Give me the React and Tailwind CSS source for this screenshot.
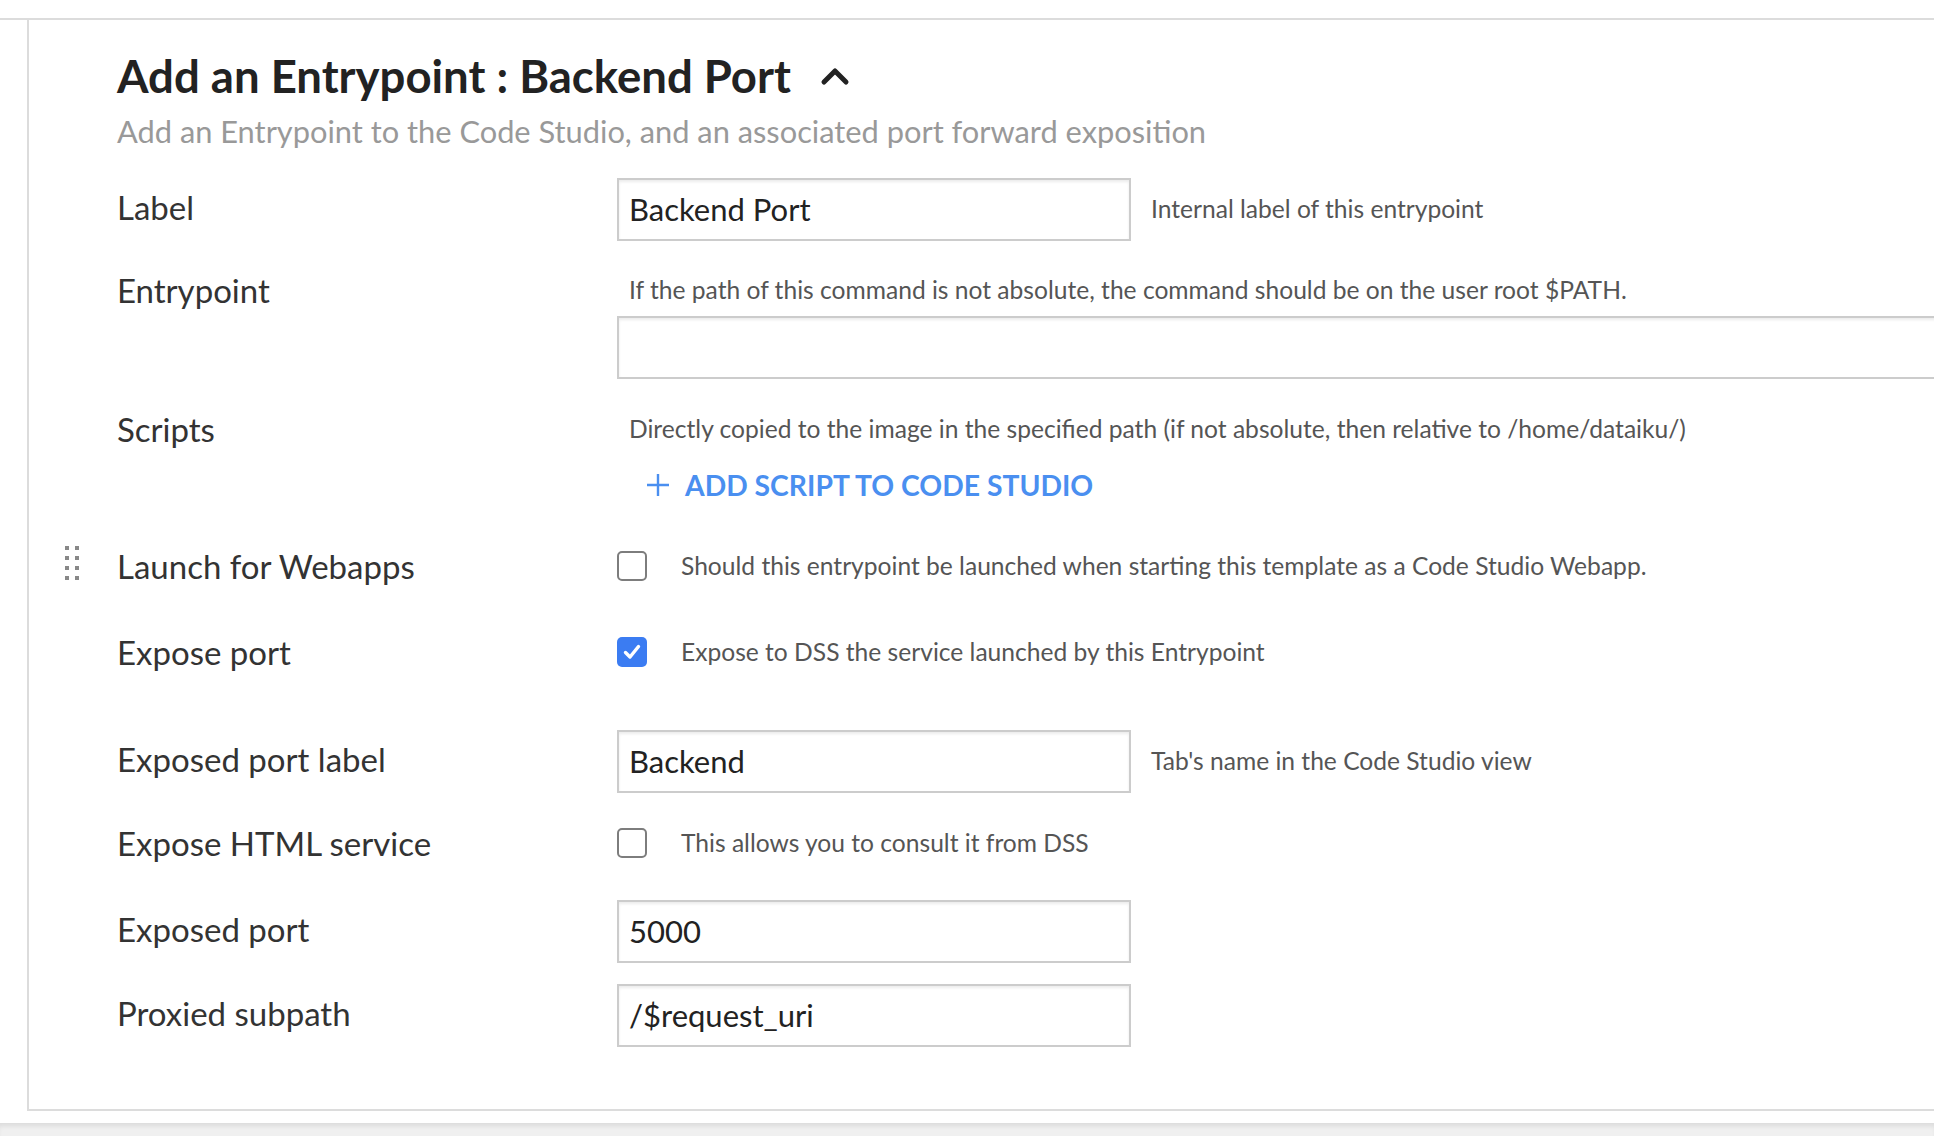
import React from "react";

function Checkbox({ checked }) {
  if (checked) {
    return (
      <div className="w-[30px] h-[30px] rounded-[5px] bg-[#3b7cf2] flex items-center justify-center shrink-0">
        <svg width="20" height="20" viewBox="0 0 20 20">
          <path d="M3.5 10.5 L8 15 L16.5 4.5" fill="none" stroke="white" strokeWidth="3.4" strokeLinecap="round" strokeLinejoin="round" />
        </svg>
      </div>
    );
  }
  return <div className="w-[30px] h-[30px] rounded-[5px] border-2 border-[#7d7d7d] bg-white shrink-0" />;
}

function TextInput({ value, wide }) {
  return (
    <div
      className={
        (wide ? "w-[1400px] " : "w-[514px] ") +
        "h-[63px] border-2 border-[#cccccc] bg-white shadow-[inset_0_2px_3px_rgba(0,0,0,0.08)] flex items-center pl-[10px] text-[31px] text-[#222] shrink-0"
      }
    >
      {value}
    </div>
  );
}

function Label({ children, lift }) {
  return (
    <div
      className={
        (lift ? "relative top-[-3px] " : "") +
        "w-[500px] shrink-0 text-[33px] text-[#333] leading-[40px]"
      }
    >
      {children}
    </div>
  );
}

export default function App() {
  return (
    <div className="w-full h-[1136px] overflow-hidden bg-white flex flex-col font-['Lato',sans-serif]">
      <div className="h-[18px] shrink-0" />
      <div className="border-t-2 border-[#dcdcdc] shrink-0">
        <div className="ml-[27px] border-l-2 border-b-2 border-[#dcdcdc] pl-[88px] pt-[28px] pb-[62px] relative">
          {/* Title */}
          <div className="flex items-center h-[56px]">
            <h1 className="text-[45.5px] font-bold text-[#222] leading-[56px]">Add an Entrypoint : Backend Port</h1>
            <svg className="ml-[29px]" width="30" height="20" viewBox="0 0 30 20">
              <path d="M4 16 L15 5 L26 16" fill="none" stroke="#222" strokeWidth="5" strokeLinecap="round" strokeLinejoin="round" />
            </svg>
          </div>
          <div className="mt-[8px] text-[30.8px] text-[#999] leading-[40px]">
            Add an Entrypoint to the Code Studio, and an associated port forward exposition
          </div>

          {/* Label */}
          <div className="mt-[26px] flex items-center">
            <Label lift>Label</Label>
            <TextInput value="Backend Port" />
            <div className="ml-[20px] text-[24.6px] text-[#555]">Internal label of this entrypoint</div>
          </div>

          {/* Entrypoint */}
          <div className="mt-[29px] flex items-start">
            <Label>Entrypoint</Label>
            <div className="flex flex-col">
              <div className="pl-[12px] text-[24.6px] text-[#555] leading-[40px]">
                If the path of this command is not absolute, the command should be on the user root $PATH.
              </div>
              <div className="mt-[6px]">
                <TextInput value="" wide />
              </div>
            </div>
          </div>

          {/* Scripts */}
          <div className="mt-[30px] flex items-start">
            <Label>Scripts</Label>
            <div className="flex flex-col">
              <div className="pl-[12px] text-[24.6px] text-[#555] leading-[40px]">
                Directly copied to the image in the specified path (if not absolute, then relative to /home/dataiku/)
              </div>
              <div className="mt-[16px] h-[40px] flex items-center pl-[28px] text-[#4a8ff0]">
                <svg width="26" height="26" viewBox="0 0 26 26">
                  <path d="M13 2 V24 M2 13 H24" stroke="#4a8ff0" strokeWidth="2.4" />
                </svg>
                <span className="ml-[14px] text-[28.3px] font-bold uppercase">Add script to Code Studio</span>
              </div>
            </div>
          </div>

          {/* Launch for Webapps */}
          <div className="mt-[41px] flex items-center h-[40px] relative">
            <div className="absolute left-[-52px] top-[0px] grid grid-cols-2 gap-x-[6px] gap-y-[6px]">
              {Array.from({ length: 8 }).map((_, i) => (
                <div key={i} className="w-[4px] h-[4px] bg-[#888]" />
              ))}
            </div>
            <Label>Launch for Webapps</Label>
            <Checkbox />
            <div className="ml-[34px] text-[24.6px] text-[#555]">
              Should this entrypoint be launched when starting this template as a Code Studio Webapp.
            </div>
          </div>

          {/* Expose port */}
          <div className="mt-[46px] flex items-center h-[40px]">
            <Label>Expose port</Label>
            <Checkbox checked />
            <div className="ml-[34px] text-[24.6px] text-[#555]">Expose to DSS the service launched by this Entrypoint</div>
          </div>

          {/* Exposed port label */}
          <div className="mt-[58px] flex items-center">
            <Label lift>Exposed port label</Label>
            <TextInput value="Backend" />
            <div className="ml-[20px] text-[24.6px] text-[#555]">Tab's name in the Code Studio view</div>
          </div>

          {/* Expose HTML service */}
          <div className="mt-[30px] flex items-center h-[40px]">
            <Label>Expose HTML service</Label>
            <Checkbox />
            <div className="ml-[34px] text-[24.6px] text-[#555]">This allows you to consult it from DSS</div>
          </div>

          {/* Exposed port */}
          <div className="mt-[37px] flex items-center">
            <Label lift>Exposed port</Label>
            <TextInput value="5000" />
          </div>

          {/* Proxied subpath */}
          <div className="mt-[21px] flex items-center">
            <Label lift>Proxied subpath</Label>
            <TextInput value="/$request_uri" />
          </div>
        </div>
      </div>
      <div className="h-[12px] shrink-0" />
      <div className="flex-1 bg-[#f0f0f0] shadow-[inset_0_5px_5px_-2px_rgba(0,0,0,0.09)]" />
    </div>
  );
}
